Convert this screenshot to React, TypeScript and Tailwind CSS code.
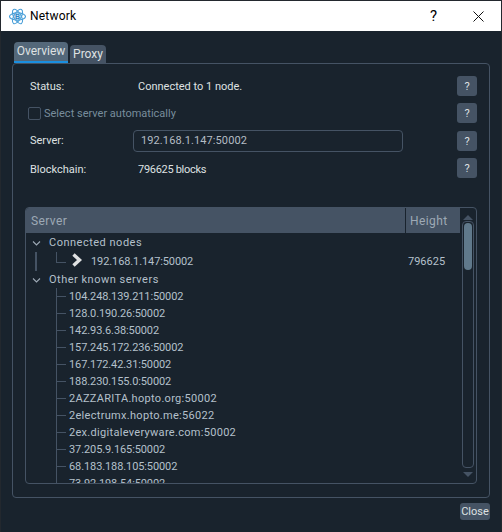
const servers = [
  "104.248.139.211:50002",
  "128.0.190.26:50002",
  "142.93.6.38:50002",
  "157.245.172.236:50002",
  "167.172.42.31:50002",
  "188.230.155.0:50002",
  "2AZZARITA.hopto.org:50002",
  "2electrumx.hopto.me:56022",
  "2ex.digitaleveryware.com:50002",
  "37.205.9.165:50002",
  "68.183.188.105:50002",
  "73.92.198.54:50002",
];

function AppIcon() {
  return (
    <svg width="17" height="17" viewBox="0 0 17 17" fill="none" stroke="#4a9fd8" strokeWidth="1.1">
      <ellipse cx="8.5" cy="8.5" rx="8" ry="3.6" />
      <ellipse cx="8.5" cy="8.5" rx="8" ry="3.6" transform="rotate(60 8.5 8.5)" />
      <ellipse cx="8.5" cy="8.5" rx="8" ry="3.6" transform="rotate(120 8.5 8.5)" />
      <circle cx="8.5" cy="8.5" r="3.6" fill="#d4ebf8" stroke="#4a9fd8" strokeWidth="0.8" />
      <text x="8.5" y="11" textAnchor="middle" fontSize="7" fontWeight="700" fill="#2f86c4" stroke="none" fontFamily="Liberation Sans, sans-serif">B</text>
    </svg>
  );
}

function HelpButton({ className = "" }: { className?: string }) {
  return (
    <button className={`w-5 h-5 shrink-0 rounded-[3px] bg-[#455364] text-[#dfe1e2] text-[11px] leading-none flex items-center justify-center ${className}`}>
      ?
    </button>
  );
}

function Chevron() {
  return (
    <svg width="9" height="7" viewBox="0 0 9 7" fill="none" stroke="#9da9b5" strokeWidth="1.1" className="shrink-0">
      <path d="M1 1.5 L4.5 5 L8 1.5" />
    </svg>
  );
}

function ServerRow({ name }: { name: string }) {
  const isHost = /[a-zA-Z]/.test(name);
  return (
    <div className="h-[17px] flex pl-[30px] shrink-0">
      <div className="w-[10px] border-l border-[#455364] flex items-center shrink-0">
        <div className="h-px w-full bg-[#455364]" />
      </div>
      <span className={`ml-[3px] leading-[17px] whitespace-nowrap ${isHost ? "tracking-[0.3px]" : "tracking-[-0.1px]"}`}>{name}</span>
    </div>
  );
}

export default function App() {
  return (
    <div className="w-[502px] h-[532px] flex flex-col overflow-hidden bg-[#19232d] border-x border-t border-[#23282e] text-[11px] text-[#dfe1e2] font-['Roboto','Noto_Sans',sans-serif]">
      {/* Title bar */}
      <div className="h-[30px] bg-white shrink-0 flex items-center text-black">
        <div className="ml-2 mr-[4px]">
          <AppIcon />
        </div>
        <span className="text-[12px] tracking-[0.2px]">Network</span>
        <span className="ml-auto text-[15px] leading-none mr-[36px]">?</span>
        <svg width="11" height="11" viewBox="0 0 11 11" stroke="#111" strokeWidth="1" className="mr-[17px]">
          <path d="M0.5 0.5 L10.5 10.5 M10.5 0.5 L0.5 10.5" />
        </svg>
      </div>

      <div className="flex-1 min-h-0 flex flex-col px-[11px] pt-[11px]">
        {/* Tabs */}
        <div className="flex items-end h-[21px] pl-[2px] shrink-0 gap-[2px] text-[12px]">
          <div className="h-[21px] w-[54px] rounded-t-[4px] bg-[#54687a] border-b-2 border-[#1a8fe0] text-center leading-[18px] text-[#dfe1e2]">
            Overview
          </div>
          <div className="h-[18px] w-[36px] rounded-t-[4px] bg-[#455364] text-center leading-[18px] text-[#dfe1e2]">
            Proxy
          </div>
        </div>

        {/* Pane */}
        <div className="w-[478px] h-[435px] shrink-0 border border-[#455364] rounded-[4px] flex flex-col pl-[12px] pr-[12px] pt-[12px]">
          <div className="h-5 flex items-center">
            <span className="w-[113px] pl-[5px] pt-[3px]">Status:</span>
            <span className="pt-[3px]">Connected to 1 node.</span>
            <HelpButton className="ml-auto" />
          </div>
          <div className="h-5 mt-[7px] flex items-center text-[#788d9c]">
            <span className="w-[13px] h-[13px] ml-[3px] mr-[3px] border border-[#455364] rounded-[2px]" />
            <span className="pt-[3px]">Select server automatically</span>
            <HelpButton className="ml-auto" />
          </div>
          <div className="h-5 mt-[8px] flex items-center">
            <span className="w-[108px] pl-[5px] shrink-0 pt-px">Server:</span>
            <div className="w-[270px] h-[22px] border border-[#455364] rounded-[4px] pl-[7px] flex items-center text-[#b4bcc4] tracking-[0.1px]">
              192.168.1.147:50002
            </div>
            <HelpButton className="ml-auto" />
          </div>
          <div className="h-5 mt-[7px] flex items-center">
            <span className="w-[113px] pl-[5px] pt-1">Blockchain:</span>
            <span className="pt-1 tracking-[-0.3px]">796625 blocks</span>
            <HelpButton className="ml-auto" />
          </div>

          {/* Server tree */}
          <div className="mt-[29px] w-[452px] h-[277px] border border-[#455364] rounded-[4px] flex overflow-hidden text-[#b4c0cb]">
            <div className="flex-1 min-w-0 flex flex-col overflow-hidden">
              <div className="h-[25px] flex shrink-0 bg-[#455364] text-[#9da9b5] text-[12px] tracking-[0.4px]">
                <span className="w-[380px] pl-[5px] pt-px leading-[24px] border-r border-[#19232d]">Server</span>
                <span className="flex-1 pl-[4px] pt-px leading-[24px]">Height</span>
              </div>
              <div className="h-[19px] pt-px flex items-center pl-[6px] shrink-0">
                <Chevron />
                <span className="ml-[8px] tracking-[0.5px]">Connected nodes</span>
              </div>
              <div className="h-[19px] flex shrink-0">
                <div className="w-[2px] ml-[9px] bg-[#455364] shrink-0" />
                <div className="w-[10px] h-[11px] ml-[19px] border-l border-b border-[#455364] shrink-0" />
                <svg width="12" height="14" viewBox="0 0 12 14" fill="none" stroke="#dfe1e2" strokeWidth="3.4" className="ml-[5px] mt-[1px] shrink-0">
                  <path d="M2.5 1.5 L8.5 7 L2.5 12.5" />
                </svg>
                <span className="ml-[8px] leading-[19px] w-[317px] whitespace-nowrap tracking-[-0.1px]">192.168.1.147:50002</span>
                <span className="leading-[19px]">796625</span>
              </div>
              <div className="h-[17px] pt-px flex items-center pl-[6px] shrink-0">
                <Chevron />
                <span className="ml-[8px] tracking-[0.5px]">Other known servers</span>
              </div>
              <div className="flex-1 min-h-0 overflow-hidden">
                {servers.map((name) => (
                  <ServerRow key={name} name={name} />
                ))}
              </div>
            </div>

            {/* Scrollbar */}
            <div className="w-[16px] shrink-0 flex flex-col items-center">
              <div className="mt-[7px] w-0 h-0 border-x-[5px] border-x-transparent border-b-[5px] border-b-[#455364]" />
              <div className="mt-[1px] w-[12px] flex-1 border border-[#455364] rounded-[4px] pt-[1px] px-px -ml-[1px]">
                <div className="w-[8px] h-[47px] rounded-[4px] bg-[#60798b]" />
              </div>
              <div className="mt-[4px] mb-[6px] w-0 h-0 border-x-[5px] border-x-transparent border-t-[5px] border-t-[#455364]" />
            </div>
          </div>
        </div>

        {/* Footer */}
        <div className="flex justify-end mt-[5px]">
          <button className="w-[30px] h-[17px] rounded-[3px] bg-[#455364] text-[#dfe1e2] text-[11px] leading-[17px] text-center">
            Close
          </button>
        </div>
      </div>
    </div>
  );
}
